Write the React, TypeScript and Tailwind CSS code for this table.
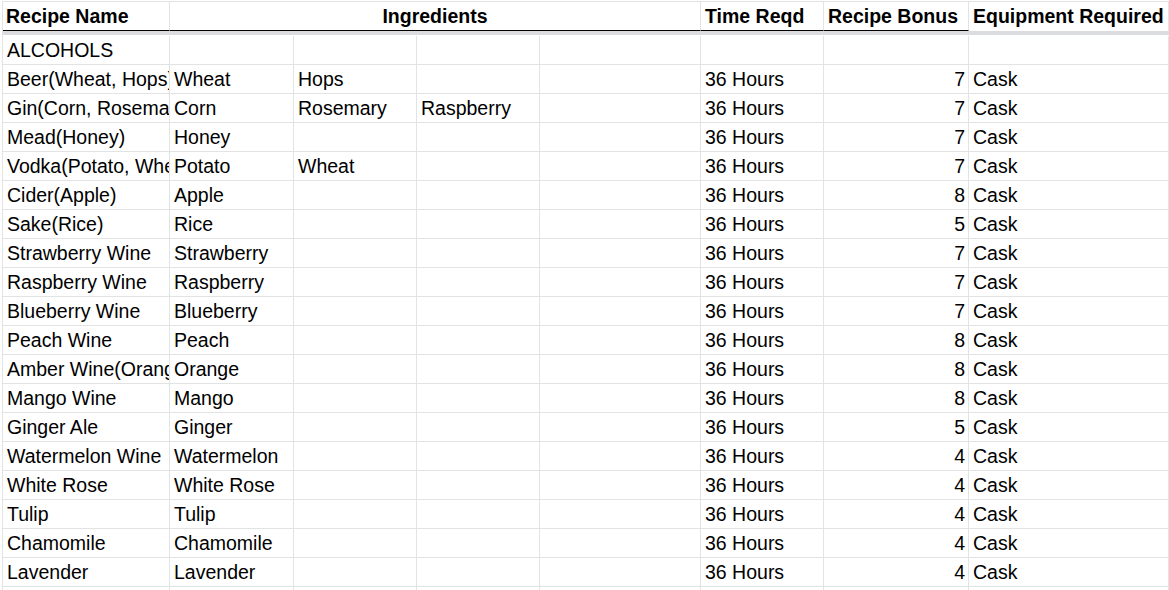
const COLS = "grid-cols-[167px_124px_123px_123px_161px_123px_145px_200px]";

type Row = [string, string, string, string, string, string];

const rows: Row[] = [
  ["Beer(Wheat, Hops)", "Wheat", "Hops", "", "7", "Cask"],
  ["Gin(Corn, Rosemary, Raspberry)", "Corn", "Rosemary", "Raspberry", "7", "Cask"],
  ["Mead(Honey)", "Honey", "", "", "7", "Cask"],
  ["Vodka(Potato, Wheat)", "Potato", "Wheat", "", "7", "Cask"],
  ["Cider(Apple)", "Apple", "", "", "8", "Cask"],
  ["Sake(Rice)", "Rice", "", "", "5", "Cask"],
  ["Strawberry Wine", "Strawberry", "", "", "7", "Cask"],
  ["Raspberry Wine", "Raspberry", "", "", "7", "Cask"],
  ["Blueberry Wine", "Blueberry", "", "", "7", "Cask"],
  ["Peach Wine", "Peach", "", "", "8", "Cask"],
  ["Amber Wine(Orange)", "Orange", "", "", "8", "Cask"],
  ["Mango Wine", "Mango", "", "", "8", "Cask"],
  ["Ginger Ale", "Ginger", "", "", "5", "Cask"],
  ["Watermelon Wine", "Watermelon", "", "", "4", "Cask"],
  ["White Rose", "White Rose", "", "", "4", "Cask"],
  ["Tulip", "Tulip", "", "", "4", "Cask"],
  ["Chamomile", "Chamomile", "", "", "4", "Cask"],
  ["Lavender", "Lavender", "", "", "4", "Cask"],
];

function Cell({ children, right }: { children?: string; right?: boolean }) {
  return (
    <div
      className={`border-r border-b border-[#e2e3e3] overflow-hidden whitespace-nowrap leading-[28px] ${
        right ? "text-right pr-[3px]" : "pl-[4px]"
      }`}
    >
      {children}
    </div>
  );
}

function BodyRow({ cells, first }: { cells: string[]; first?: boolean }) {
  return (
    <div className={`grid ${COLS} ${first ? "h-[30px] pt-[1px]" : "h-[29px]"}`}>
      <Cell>{cells[0]}</Cell>
      <Cell>{cells[1]}</Cell>
      <Cell>{cells[2]}</Cell>
      <Cell>{cells[3]}</Cell>
      <Cell />
      <Cell>{cells[4] ? "36 Hours" : ""}</Cell>
      <Cell right>{cells[4]}</Cell>
      <Cell>{cells[5]}</Cell>
    </div>
  );
}

export default function App() {
  return (
    <div className="w-[1169px] h-[590px] overflow-hidden bg-white text-black text-[19.5px] font-['Liberation_Sans',Arial,sans-serif] pt-[1px] pl-[2px]">
      <div className="border-l border-t border-[#e2e3e3] w-[1167px]">
        <div className="grid grid-cols-[167px_531px_123px_145px_200px] h-[29px] font-bold leading-[28px] whitespace-nowrap">
          <div className="border-r border-[#e2e3e3] border-b border-b-black pl-[3px]">Recipe Name</div>
          <div className="border-r border-[#e2e3e3] border-b border-b-black text-center">Ingredients</div>
          <div className="border-r border-[#e2e3e3] border-b border-b-black pl-[4px]">Time Reqd</div>
          <div className="border-r border-[#e2e3e3] border-b border-b-black pl-[4px]">Recipe Bonus</div>
          <div className="border-r border-[#e2e3e3] pl-[4px]">Equipment Required</div>
        </div>
        <div className="h-[4px] bg-[#dadce0]" />
        <BodyRow cells={["ALCOHOLS", "", "", "", "", ""]} first />
        {rows.map((r, i) => (
          <BodyRow key={i} cells={r} />
        ))}
        <BodyRow cells={["", "", "", "", "", ""]} />
      </div>
    </div>
  );
}
